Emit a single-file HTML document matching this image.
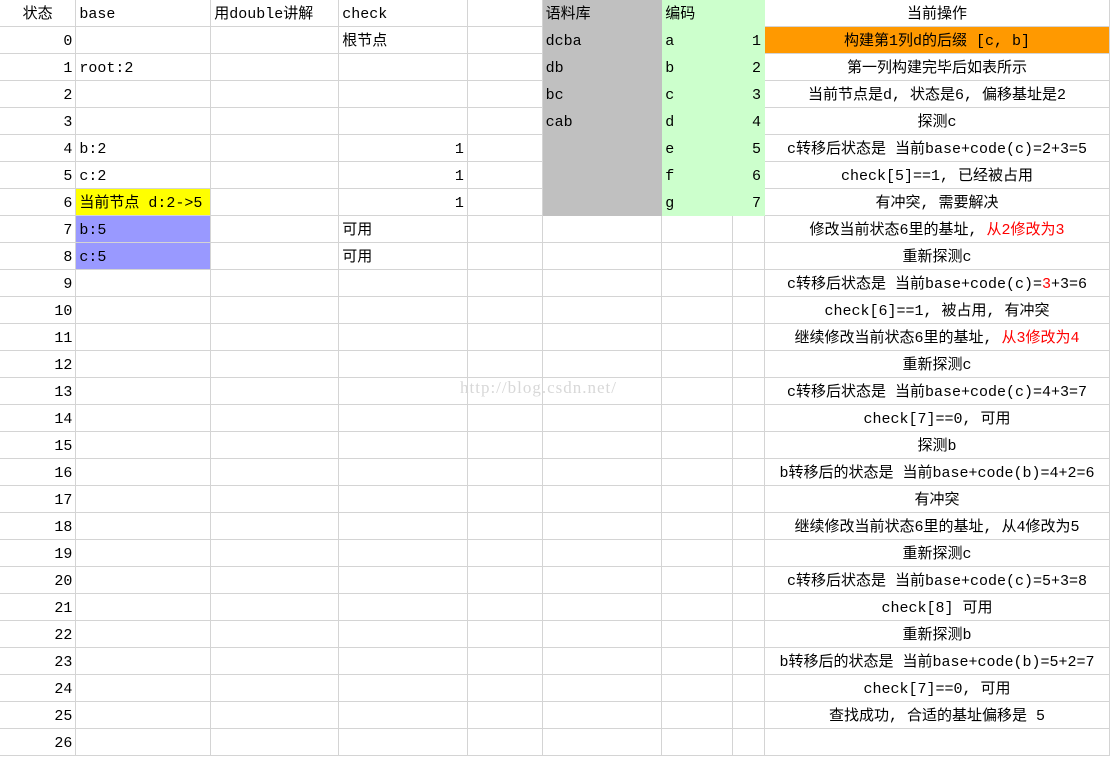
<!DOCTYPE html>
<html><head><meta charset="utf-8"><style>
body{margin:0;width:1110px;height:759px;overflow:hidden;background:#fff;font-family:"Liberation Mono","Noto Sans CJK SC",monospace;font-size:15px;color:#000}
table{border-collapse:collapse;table-layout:fixed;position:absolute;left:0;top:0}
td{height:23px;padding:3px 3px 0 3px;border-right:1px solid #d4d4d4;border-bottom:1px solid #d4d4d4;white-space:nowrap;overflow:visible;line-height:23px}
.r{text-align:right}.c{text-align:center}
.g{background:#c0c0c0;border-color:#c0c0c0}
.gr{background:#ccffcc;border-color:#ccffcc}
.y{background:#ffff00}.b{background:#9999ff}.o{background:#ff9900}
.red{color:#ff0000}
.wm{position:absolute;left:460px;top:378px;color:#d8d8d8;font-family:"Liberation Serif",serif;font-size:17px;letter-spacing:1px}
</style></head><body>
<table>
<colgroup><col style="width:76px"><col style="width:135px"><col style="width:128px"><col style="width:129px"><col style="width:75px"><col style="width:120px"><col style="width:71px"><col style="width:32px"><col style="width:345px"></colgroup>
<tr><td class="c">状态</td><td>base</td><td>用double讲解</td><td>check</td><td></td><td class="g">语料库</td><td class="gr">编码</td><td class="gr"></td><td class="c">当前操作</td></tr>
<tr><td class="r">0</td><td></td><td></td><td>根节点</td><td></td><td class="g">dcba</td><td class="gr">a</td><td class="gr r">1</td><td class="c o">构建第1列d的后缀 [c, b]</td></tr>
<tr><td class="r">1</td><td>root:2</td><td></td><td></td><td></td><td class="g">db</td><td class="gr">b</td><td class="gr r">2</td><td class="c">第一列构建完毕后如表所示</td></tr>
<tr><td class="r">2</td><td></td><td></td><td></td><td></td><td class="g">bc</td><td class="gr">c</td><td class="gr r">3</td><td class="c">当前节点是d, 状态是6, 偏移基址是2</td></tr>
<tr><td class="r">3</td><td></td><td></td><td></td><td></td><td class="g">cab</td><td class="gr">d</td><td class="gr r">4</td><td class="c">探测c</td></tr>
<tr><td class="r">4</td><td>b:2</td><td></td><td class="r">1</td><td></td><td class="g"></td><td class="gr">e</td><td class="gr r">5</td><td class="c">c转移后状态是 当前base+code(c)=2+3=5</td></tr>
<tr><td class="r">5</td><td>c:2</td><td></td><td class="r">1</td><td></td><td class="g"></td><td class="gr">f</td><td class="gr r">6</td><td class="c">check[5]==1, 已经被占用</td></tr>
<tr><td class="r">6</td><td class="y">当前节点 d:2->5</td><td></td><td class="r">1</td><td></td><td class="g"></td><td class="gr">g</td><td class="gr r">7</td><td class="c">有冲突, 需要解决</td></tr>
<tr><td class="r">7</td><td class="b">b:5</td><td></td><td>可用</td><td></td><td></td><td></td><td></td><td class="c">修改当前状态6里的基址, <span class="red">从2修改为3</span></td></tr>
<tr><td class="r">8</td><td class="b">c:5</td><td></td><td>可用</td><td></td><td></td><td></td><td></td><td class="c">重新探测c</td></tr>
<tr><td class="r">9</td><td></td><td></td><td></td><td></td><td></td><td></td><td></td><td class="c">c转移后状态是 当前base+code(c)=<span class="red">3</span>+3=6</td></tr>
<tr><td class="r">10</td><td></td><td></td><td></td><td></td><td></td><td></td><td></td><td class="c">check[6]==1, 被占用, 有冲突</td></tr>
<tr><td class="r">11</td><td></td><td></td><td></td><td></td><td></td><td></td><td></td><td class="c">继续修改当前状态6里的基址, <span class="red">从3修改为4</span></td></tr>
<tr><td class="r">12</td><td></td><td></td><td></td><td></td><td></td><td></td><td></td><td class="c">重新探测c</td></tr>
<tr><td class="r">13</td><td></td><td></td><td></td><td></td><td></td><td></td><td></td><td class="c">c转移后状态是 当前base+code(c)=4+3=7</td></tr>
<tr><td class="r">14</td><td></td><td></td><td></td><td></td><td></td><td></td><td></td><td class="c">check[7]==0, 可用</td></tr>
<tr><td class="r">15</td><td></td><td></td><td></td><td></td><td></td><td></td><td></td><td class="c">探测b</td></tr>
<tr><td class="r">16</td><td></td><td></td><td></td><td></td><td></td><td></td><td></td><td class="c">b转移后的状态是 当前base+code(b)=4+2=6</td></tr>
<tr><td class="r">17</td><td></td><td></td><td></td><td></td><td></td><td></td><td></td><td class="c">有冲突</td></tr>
<tr><td class="r">18</td><td></td><td></td><td></td><td></td><td></td><td></td><td></td><td class="c">继续修改当前状态6里的基址, 从4修改为5</td></tr>
<tr><td class="r">19</td><td></td><td></td><td></td><td></td><td></td><td></td><td></td><td class="c">重新探测c</td></tr>
<tr><td class="r">20</td><td></td><td></td><td></td><td></td><td></td><td></td><td></td><td class="c">c转移后状态是 当前base+code(c)=5+3=8</td></tr>
<tr><td class="r">21</td><td></td><td></td><td></td><td></td><td></td><td></td><td></td><td class="c">check[8] 可用</td></tr>
<tr><td class="r">22</td><td></td><td></td><td></td><td></td><td></td><td></td><td></td><td class="c">重新探测b</td></tr>
<tr><td class="r">23</td><td></td><td></td><td></td><td></td><td></td><td></td><td></td><td class="c">b转移后的状态是 当前base+code(b)=5+2=7</td></tr>
<tr><td class="r">24</td><td></td><td></td><td></td><td></td><td></td><td></td><td></td><td class="c">check[7]==0, 可用</td></tr>
<tr><td class="r">25</td><td></td><td></td><td></td><td></td><td></td><td></td><td></td><td class="c">查找成功, 合适的基址偏移是 5</td></tr>
<tr><td class="r">26</td><td></td><td></td><td></td><td></td><td></td><td></td><td></td><td class="c"></td></tr>
</table>
<div class="wm">http://blog.csdn.net/</div>
</body></html>
